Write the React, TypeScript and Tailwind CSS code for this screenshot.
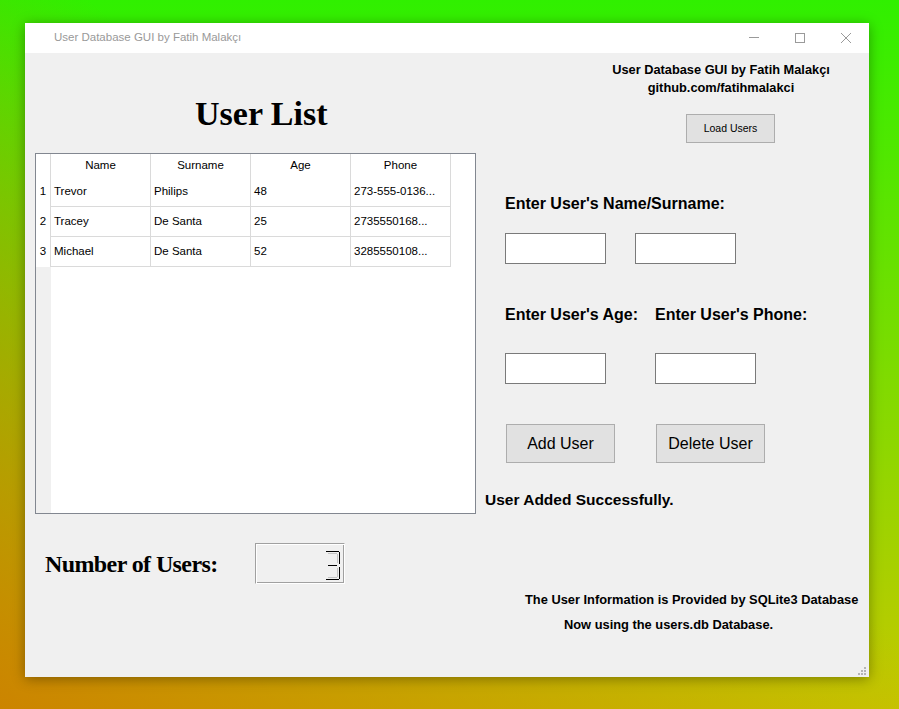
import { Fragment } from "react"

const users = [
  { name: "Trevor", surname: "Philips", age: "48", phone: "273-555-0136..." },
  { name: "Tracey", surname: "De Santa", age: "25", phone: "2735550168..." },
  { name: "Michael", surname: "De Santa", age: "52", phone: "3285550108..." },
]

const headers = ["Name", "Surname", "Age", "Phone"]

function TitleBar() {
  return (
    <div className="h-[30px] bg-white flex items-center">
      <span className="pl-[29px] flex-1 text-[11.5px] text-[#999] font-['Liberation_Sans',Arial,sans-serif]">
        User Database GUI by Fatih Malakçı
      </span>
      <div className="flex h-full">
        <div className="w-[46px] h-full flex items-center justify-center">
          <svg width="10" height="10" viewBox="0 0 10 10">
            <path d="M0 4.5H10" stroke="#9a9a9a" />
          </svg>
        </div>
        <div className="w-[46px] h-full flex items-center justify-center">
          <svg width="10" height="10" viewBox="0 0 10 10">
            <rect x="0.5" y="0.5" width="9" height="9" fill="none" stroke="#9a9a9a" />
          </svg>
        </div>
        <div className="w-[46px] h-full flex items-center justify-center">
          <svg width="10" height="10" viewBox="0 0 10 10">
            <path d="M0 0L10 10M10 0L0 10" stroke="#9a9a9a" />
          </svg>
        </div>
      </div>
    </div>
  )
}

function UserTable() {
  return (
    <div className="w-[441px] h-[361px] border border-[#828790] bg-white flex flex-col text-[11.5px] text-black font-['Liberation_Sans',Arial,sans-serif]">
      <div className="grid grid-cols-[15px_100px_100px_100px_100px] grid-rows-[23px_30px_30px_30px]">
        <div className="border-r border-[#dadada]" />
        {headers.map((h) => (
          <div key={h} className="border-r border-[#dadada] flex items-center justify-center">
            {h}
          </div>
        ))}
        {users.map((u, i) => (
          <Fragment key={i}>
            <div className="border-r border-[#dadada] flex items-center justify-center">{i + 1}</div>
            {[u.name, u.surname, u.age, u.phone].map((v, j) => (
              <div key={j} className="border-r border-b border-[#dadada] flex items-center pl-[3px]">
                {v}
              </div>
            ))}
          </Fragment>
        ))}
      </div>
      <div className="flex-1 flex">
        <div className="w-[15px] bg-[#f0f0f0]" />
      </div>
    </div>
  )
}

function LcdThree() {
  return (
    <svg width="15" height="29" viewBox="0 0 15 29">
      <path d="M1 0.5H14" stroke="#000" />
      <path d="M3 2.5H12" stroke="#c4c4c4" />
      <path d="M14.5 1V13" stroke="#000" />
      <path d="M12.5 3V12" stroke="#c4c4c4" />
      <path d="M3 14.5H12" stroke="#000" />
      <path d="M14.5 16V28" stroke="#000" />
      <path d="M12.5 17V26" stroke="#c4c4c4" />
      <path d="M3 26.5H12" stroke="#c4c4c4" />
      <path d="M1 28.5H14" stroke="#000" />
    </svg>
  )
}

function LeftColumn() {
  return (
    <div className="pl-[10px] flex flex-col">
      <h1 className="mt-[41px] pl-[160px] leading-[40px] text-[34px] font-bold text-black font-['Liberation_Serif','Times_New_Roman',serif]">
        User List
      </h1>
      <div className="mt-[19px]">
        <UserTable />
      </div>
      <div className="mt-[29px] flex">
        <div className="w-[220px] pl-[10px] pt-[6px] leading-[30px] text-[24px] tracking-[-0.6px] font-bold text-black font-['Liberation_Serif','Times_New_Roman',serif]">
          Number of Users:
        </div>
        <div className="w-[90px] h-[41px] border border-t-[#a0a0a0] border-l-[#a0a0a0] border-r-white border-b-white shadow-[inset_1px_1px_0_#fff,inset_-1px_-1px_0_#a0a0a0] pl-[69px] pt-[7px]">
          <LcdThree />
        </div>
      </div>
    </div>
  )
}

const inputCls = "w-[101px] h-[31px] border border-[#7a7a7a] bg-white outline-none"
const labelCls = "leading-[20px] text-[16px] font-bold text-black"

function RightColumn() {
  return (
    <div className="flex flex-col font-['Liberation_Sans',Arial,sans-serif] text-black">
      <div className="mt-[8px] ml-[115px] w-[260px] text-center text-[12.8px] font-bold leading-[18px]">
        <div>User Database GUI by Fatih Malakçı</div>
        <div>github.com/fatihmalakci</div>
      </div>
      <button className="mt-[17px] ml-[210px] w-[89px] h-[29px] bg-[#e1e1e1] border border-[#adadad] text-[10.5px] text-black">
        Load Users
      </button>
      <div className={`mt-[51px] ml-[29px] ${labelCls}`}>Enter User's Name/Surname:</div>
      <div className="mt-[19px] ml-[29px] flex gap-[29px]">
        <input className={inputCls} />
        <input className={inputCls} />
      </div>
      <div className={`mt-[41px] ml-[29px] flex ${labelCls}`}>
        <span className="w-[150px]">Enter User's Age:</span>
        <span>Enter User's Phone:</span>
      </div>
      <div className="mt-[28px] ml-[29px] flex gap-[49px]">
        <input className={inputCls} />
        <input className={inputCls} />
      </div>
      <div className="mt-[40px] ml-[30px] flex gap-[41px]">
        <button className="w-[109px] h-[39px] bg-[#e1e1e1] border border-[#adadad] text-[16px] text-black">Add User</button>
        <button className="w-[109px] h-[39px] bg-[#e1e1e1] border border-[#adadad] text-[16px] text-black">Delete User</button>
      </div>
      <div className="mt-[27px] ml-[9px] leading-[20px] text-[15.5px] font-bold">User Added Successfully.</div>
      <div className="mt-[77px] text-[12.85px] font-bold leading-[25px]">
        <div className="ml-[49px]">The User Information is Provided by SQLite3 Database</div>
        <div className="ml-[88px]">Now using the users.db Database.</div>
      </div>
    </div>
  )
}

export default function App() {
  return (
    <div className="w-full h-[709px] overflow-hidden pl-[25px] pt-[23px] bg-[linear-gradient(to_top_right,rgba(205,120,0,0.85)_0%,rgba(205,120,0,0)_55%),linear-gradient(to_bottom,#30f000_0%,#c5c800_100%)]">
      <div className="w-[844px] h-[654px] flex flex-col shadow-[0_2px_12px_rgba(0,0,0,0.35)]">
        <TitleBar />
        <div className="relative flex-1 bg-[#f0f0f0] flex">
          <LeftColumn />
          <RightColumn />
          <svg className="absolute right-[3px] bottom-[2px]" width="8" height="8" viewBox="0 0 8 8">
            <rect x="6" y="0" width="2" height="2" fill="#b4b4b4" />
            <rect x="3" y="3" width="2" height="2" fill="#b4b4b4" />
            <rect x="6" y="3" width="2" height="2" fill="#b4b4b4" />
            <rect x="0" y="6" width="2" height="2" fill="#b4b4b4" />
            <rect x="3" y="6" width="2" height="2" fill="#b4b4b4" />
            <rect x="6" y="6" width="2" height="2" fill="#b4b4b4" />
          </svg>
        </div>
      </div>
    </div>
  )
}
